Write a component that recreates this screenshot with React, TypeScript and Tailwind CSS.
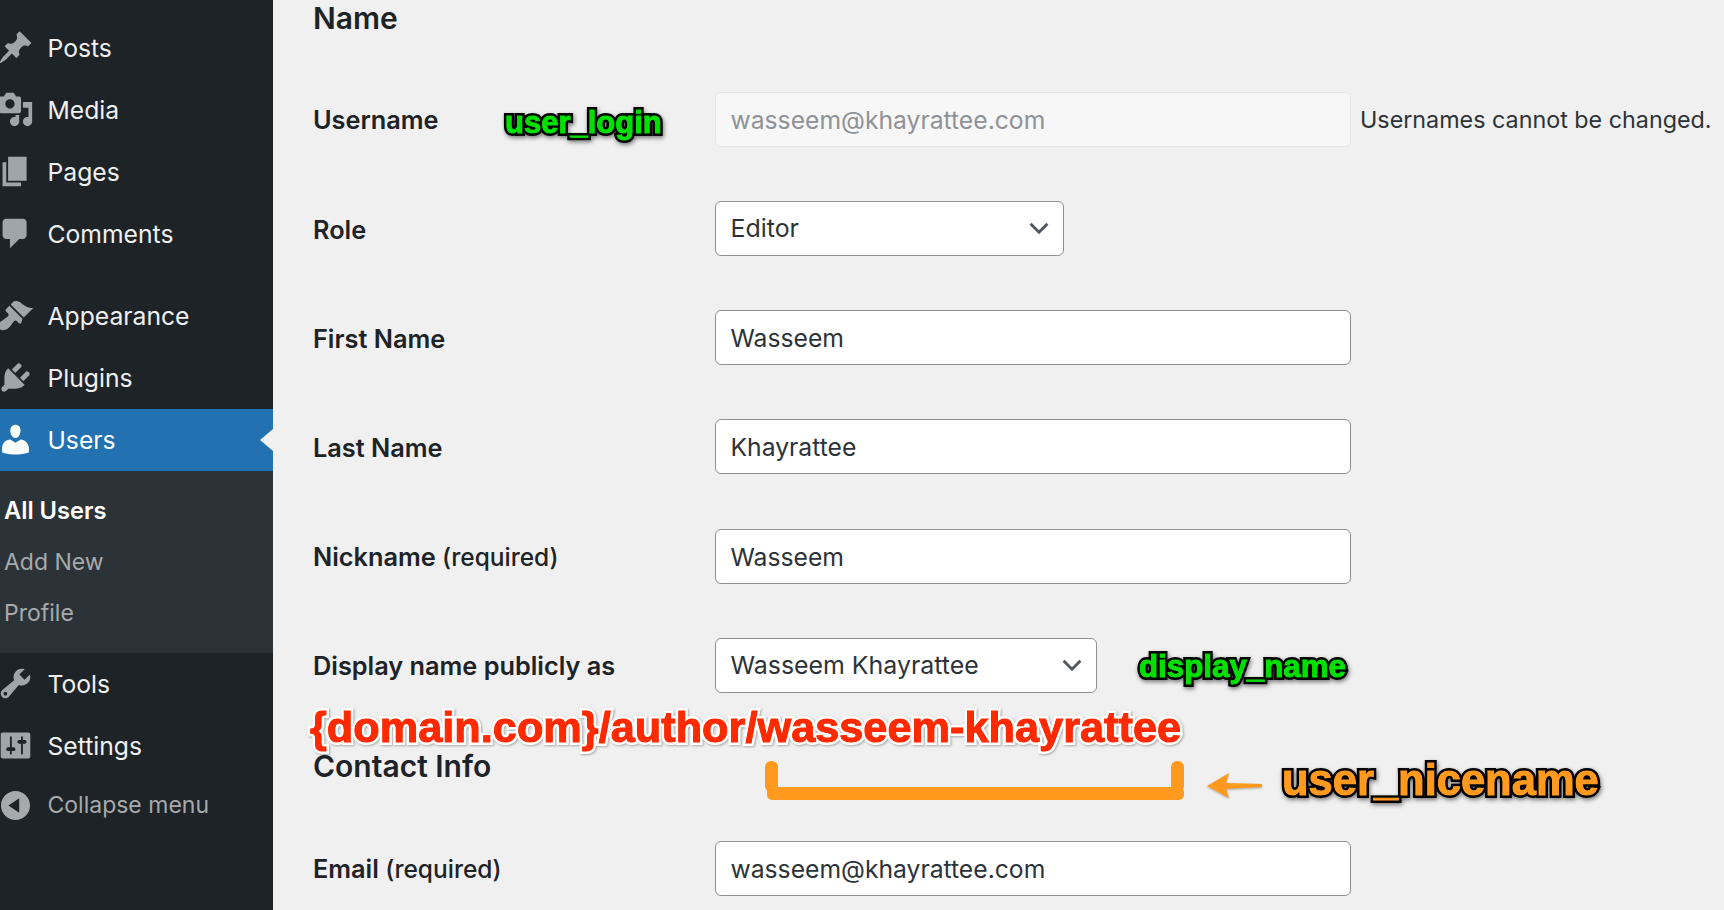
import type { ReactNode } from "react";

const icons = {
  posts: "M10.44 3.02l1.82-1.82 6.36 6.35-1.83 1.82c-1.05-.68-2.48-.57-3.41.36l-.75.75c-.92.93-1.04 2.35-.35 3.41l-1.83 1.82-2.41-2.41-2.8 2.79c-.42.42-3.38 2.71-3.8 2.29s1.86-3.39 2.28-3.81l2.79-2.79L4.1 9.36l1.83-1.82c1.05.69 2.48.57 3.4-.36l.75-.75c.93-.92 1.05-2.35.36-3.41z",
  media: "M13 11V4c0-.55-.45-1-1-1h-1.67L9 1H5L3.67 3H2c-.55 0-1 .45-1 1v7c0 .55.45 1 1 1h10c.55 0 1-.45 1-1zM7 4.5c1.38 0 2.5 1.12 2.5 2.5S8.38 9.5 7 9.5 4.5 8.38 4.5 7 5.62 4.5 7 4.5zM14 6h5v10.5c0 1.38-1.12 2.5-2.5 2.5S14 17.88 14 16.5s1.12-2.5 2.5-2.5c.17 0 .34.02.5.05V9h-3V6zm-4 8.05V13h2v3.5c0 1.38-1.12 2.5-2.5 2.5S7 17.88 7 16.5 8.12 14 9.5 14c.17 0 .34.02.5.05z",
  pages: "M6 15V2h10v13H6zm-1 1h8v2H3V5h2v11z",
  comments: "M5 2h9c1.1 0 2 .9 2 2v7c0 1.1-.9 2-2 2h-2l-5 5v-5H5c-1.1 0-2-.9-2-2V4c0-1.1.9-2 2-2z",
  appearance: "M14.48 11.06L7.41 3.99l1.5-1.5c.5-.56 2.3-.47 3.51.32 1.21.8 1.43 1.28 2.91 2.1 1.18.64 2.45 1.26 4.45.85zm-.71.71L6.7 4.7 4.93 6.47c-.39.39-.39 1.02 0 1.41l1.06 1.06c.39.39.39 1.03 0 1.42-.6.6-1.43 1.11-2.21 1.69-.35.26-.7.53-1.01.84C1.43 13.23 1 14.85 1 16c0 1.15 1.03 2 2 2 1.15 0 2.77-.43 3.73-1.77.31-.31.58-.66.84-1.01.58-.78 1.09-1.61 1.69-2.21.39-.39 1.03-.39 1.42 0l1.06 1.06c.39.39 1.02.39 1.41 0z",
  plugins: "M13.11 4.36L9.87 7.6 8 5.73l3.24-3.24c.35-.34 1.05-.2 1.56.32.52.51.66 1.21.31 1.55zm-8 1.77l.91-1.12 9.01 9.01-1.19.84c-.71.71-2.63 1.16-3.82 1.16H6.14L4.9 17.26c-.59.59-1.54.59-2.12 0-.59-.58-.59-1.53 0-2.12l1.24-1.24v-3.88c0-1.13.4-3.19 1.09-3.89zm7.26 3.97l3.24-3.24c.34-.35 1.04-.21 1.55.31.52.51.66 1.21.31 1.55l-3.24 3.25z",
  users: "M10 9.25c-2.27 0-2.73-3.44-2.73-3.44C7 4.02 7.82 2 9.97 2c2.16 0 2.98 2.02 2.71 3.81 0 0-.41 3.44-2.68 3.44zm0 2.57L12.72 10c2.39 0 4.52 2.33 4.52 4.53v2.49s-3.65 1.13-7.24 1.13c-3.65 0-7.24-1.13-7.24-1.13v-2.49c0-2.25 1.94-4.48 4.47-4.48z",
  tools: "M16.68 9.77c-1.34 1.34-3.3 1.67-4.95.99l-5.41 6.52c-.99.99-2.59.99-3.58 0s-.99-2.59 0-3.57l6.52-5.42c-.68-1.65-.35-3.61.99-4.95 1.28-1.28 3.12-1.62 4.72-1.06l-2.89 2.89 2.82 2.82 2.86-2.87c.53 1.58.18 3.39-1.08 4.65zM3.81 16.21c.4.39 1.04.39 1.43 0 .4-.4.4-1.04 0-1.43-.39-.4-1.03-.4-1.43 0-.39.39-.39 1.03 0 1.43z",
  settings: "M18 16V4c0-.55-.45-1-1-1H3c-.55 0-1 .45-1 1v12c0 .55.45 1 1 1h14c.55 0 1-.45 1-1zM8 11h1c.55 0 1 .45 1 1s-.45 1-1 1H8v1.5c0 .28-.22.5-.5.5s-.5-.22-.5-.5V13H6c-.55 0-1-.45-1-1s.45-1 1-1h1V5.5c0-.28.22-.5.5-.5s.5.22.5.5V11zm5-2h-1c-.55 0-1-.45-1-1s.45-1 1-1h1V5.5c0-.28.22-.5.5-.5s.5.22.5.5V7h1c.55 0 1 .45 1 1s-.45 1-1 1h-1v5.5c0 .28-.22.5-.5.5s-.5-.22-.5-.5V9z",
  collapse: "M10 2.16c4.33 0 7.84 3.51 7.84 7.84s-3.51 7.84-7.84 7.84S2.16 14.33 2.16 10 5.71 2.16 10 2.16zm2 11.72V6.12L6.18 9.97z",
};

const Icon = ({ d, className }: { d: string; className: string }) => (
  <svg viewBox="0 0 20 20" className={`-ml-[3.5px] h-[37px] w-[37px] shrink-0 fill-current ${className}`}>
    <path d={d} />
  </svg>
);

const MenuItem = ({ icon, label }: { icon: string; label: string }) => (
  <div className="flex h-[62px] items-center text-[24.7px] text-[#f0f0f1]">
    <Icon d={icon} className="text-[#a0a5aa]" />
    <span className="ml-[14px] pt-[2px]">{label}</span>
  </div>
);

const Field = ({ label, children }: { label: ReactNode; children: ReactNode }) => (
  <div className="flex h-[109.2px] items-center">
    <div className="w-[402px] shrink-0 pt-[2px] text-[25.3px] font-semibold text-[#1d2327]">{label}</div>
    {children}
  </div>
);

const TextInput = ({ value }: { value: string }) => (
  <input
    readOnly
    value={value}
    className="h-[55px] w-[636px] rounded-[6px] border border-[#8c8f94] bg-white px-[14.5px] pt-[1px] text-[24.7px] text-[#2c3338]"
  />
);

const Select = ({ value, width }: { value: string; width: string }) => (
  <div className={`flex h-[55px] items-center justify-between rounded-[6px] border border-[#8c8f94] bg-white pl-[14.5px] pr-[12px] text-[24.9px] text-[#2c3338] ${width}`}>
    <span>{value}</span>
    <svg viewBox="0 0 20 20" className="h-[24px] w-[24px] fill-none stroke-[#50575e] stroke-[2.4]">
      <path d="M3 6.5l7 7 7-7" />
    </svg>
  </div>
);

// the marker text: outline below, glyphs thickened a little on top
const Note = ({ text, className, fill }: { text: string; className: string; fill: string }) => (
  <span className={`absolute whitespace-nowrap font-['Liberation_Sans',sans-serif] font-bold leading-none ${className}`}>
    {text}
    <span aria-hidden="true" className={`absolute left-0 top-0 ${fill}`}>{text}</span>
  </span>
);

export default function App() {
  return (
    <div className="relative flex h-[910px] w-full overflow-hidden bg-[#f0f0f1] font-['Inter',sans-serif]">
      <aside className="flex w-[273px] shrink-0 flex-col bg-[#1d2327] pt-[16.5px]">
        <MenuItem icon={icons.posts} label="Posts" />
        <MenuItem icon={icons.media} label="Media" />
        <MenuItem icon={icons.pages} label="Pages" />
        <MenuItem icon={icons.comments} label="Comments" />
        <div className="h-[20px]" />
        <MenuItem icon={icons.appearance} label="Appearance" />
        <MenuItem icon={icons.plugins} label="Plugins" />
        <div className="relative flex h-[62px] items-center bg-[#2271b1] text-[24.7px] text-white">
          <Icon d={icons.users} className="text-white" />
          <span className="ml-[14px] pt-[3px]">Users</span>
          <div className="absolute right-0 top-[20px] h-0 w-0 border-y-[11px] border-r-[13px] border-y-transparent border-r-[#f0f0f1]" />
        </div>
        <div className="flex h-[182px] flex-col bg-[#2c3338] pt-[15px] text-[23px] text-[#a7aaad]">
          <div className="flex h-[51px] items-center pl-[4px] text-[23.7px] font-semibold text-white">All Users</div>
          <div className="flex h-[51px] items-center pl-[4px]">Add New</div>
          <div className="flex h-[51px] items-center pl-[4px]">Profile</div>
        </div>
        <MenuItem icon={icons.tools} label="Tools" />
        <MenuItem icon={icons.settings} label="Settings" />
        <div className="flex h-[58px] items-center text-[23px] text-[#a7aaad]">
          <Icon d={icons.collapse} className="text-[#a7aaad]" />
          <span className="ml-[14px]">Collapse menu</span>
        </div>
      </aside>

      <main className="min-w-0 flex-1 pl-[40px]">
        <h2 className="flex h-[37px] items-center text-[30px] font-semibold text-[#1d2327]">Name</h2>
        <div className="pt-[27.7px]">
          <Field label="Username">
            <input
              readOnly
              value="wasseem@khayrattee.com"
              className="h-[55px] w-[636px] rounded-[6px] border border-[#e6e6e7] bg-[#f7f7f7] px-[14.5px] pt-[1px] text-[24.7px] text-[#8f9296]"
            />
            <span className="ml-[9px] whitespace-nowrap pt-[3px] text-[23.3px] text-[#2c3338]">Usernames cannot be changed.</span>
          </Field>
          <Field label="Role">
            <Select value="Editor" width="w-[349px]" />
          </Field>
          <Field label="First Name">
            <TextInput value="Wasseem" />
          </Field>
          <Field label="Last Name">
            <TextInput value="Khayrattee" />
          </Field>
          <Field label={<>Nickname <span className="text-[24.5px] font-medium">(required)</span></>}>
            <TextInput value="Wasseem" />
          </Field>
          <Field label="Display name publicly as">
            <Select value="Wasseem Khayrattee" width="w-[382px]" />
          </Field>
        </div>
        <h2 className="mt-[28px] flex h-[38px] items-center text-[30px] font-semibold text-[#1d2327]">Contact Info</h2>
        <div className="pt-[28px]">
          <Field label={<>Email <span className="text-[24.5px] font-medium">(required)</span></>}>
            <TextInput value="wasseem@khayrattee.com" />
          </Field>
        </div>
      </main>

      {/* annotations drawn on top of the screenshot */}
      <Note
        text="user_login"
        className="left-[505px] top-[107px] text-[31px] text-[#00e000] [-webkit-text-stroke:6px_#000] [paint-order:stroke_fill] drop-shadow-[1px_2px_2px_rgba(0,0,0,0.5)]"
        fill="[-webkit-text-stroke:1px_#00e000]"
      />
      <Note
        text="display_name"
        className="left-[1139px] top-[651px] text-[31.3px] text-[#00e000] [-webkit-text-stroke:6px_#000] [paint-order:stroke_fill] drop-shadow-[1px_2px_2px_rgba(0,0,0,0.5)]"
        fill="[-webkit-text-stroke:1px_#00e000]"
      />
      <Note
        text="{domain.com}/author/wasseem-khayrattee"
        className="left-[310px] top-[706px] text-[43.3px] text-[#ff2a00] [-webkit-text-stroke:6px_#fff] [paint-order:stroke_fill] drop-shadow-[1px_1px_1px_rgba(0,0,0,0.3)]"
        fill="[-webkit-text-stroke:1px_#ff2a00]"
      />
      <Note
        text="user_nicename"
        className="left-[1282px] top-[759px] text-[43.5px] text-[#ff9a1f] [-webkit-text-stroke:6px_#000] [paint-order:stroke_fill] drop-shadow-[1px_2px_2px_rgba(0,0,0,0.5)]"
        fill="[-webkit-text-stroke:1px_#ff9a1f]"
      />

      <div className="absolute left-[765px] top-[761px] h-[31px] w-[13px] rounded-[6px] bg-[#ff9a1f]" />
      <div className="absolute left-[1171px] top-[761px] h-[31px] w-[13px] rounded-[6px] bg-[#ff9a1f]" />
      <div className="absolute left-[767px] top-[787px] h-[13px] w-[417px] rounded-[5px] bg-[#ff9a1f]" />
      <svg viewBox="0 0 60 28" className="absolute left-[1205px] top-[772px] h-[28px] w-[60px] fill-[#ff9a1f] drop-shadow-[0_1px_1px_rgba(0,0,0,0.3)]">
        <path d="M2 14L24 1l-3 10 36 1v3l-36 2 3 9z" />
      </svg>
    </div>
  );
}
